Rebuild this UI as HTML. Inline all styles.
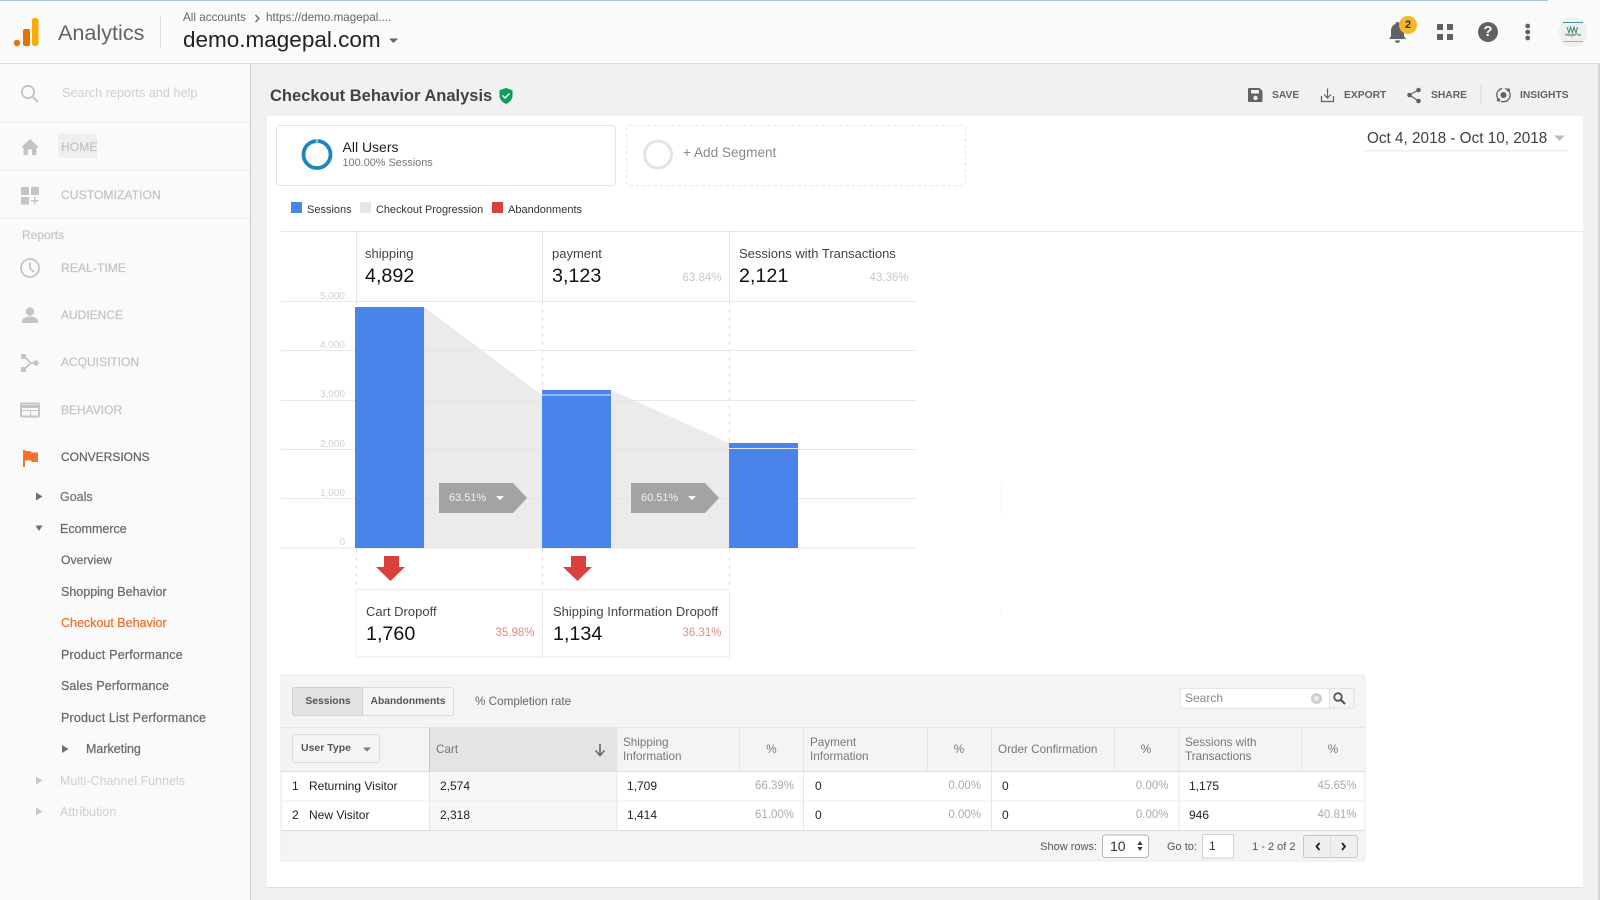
<!DOCTYPE html>
<html><head><meta charset="utf-8"><title>Checkout Behavior Analysis</title>
<style>
html,body{margin:0;padding:0;width:1600px;height:900px;overflow:hidden;background:#f1f1f1;font-family:"Liberation Sans",sans-serif}
svg.g{position:absolute;left:0;top:0}
.t{position:absolute;white-space:nowrap;line-height:20px;height:20px;color:#333;font-size:12px}
.r{text-align:right;transform:translateX(-100%)}
.c{text-align:center;transform:translateX(-50%)}
.nav{font-size:12.2px;left:61px;color:#c4c4c4;-webkit-text-stroke:.25px}
.sub{font-size:12.5px;left:61px;color:#6b6b6b;-webkit-text-stroke:.25px}
.l{font-size:12.5px;color:#cfcfcf;left:60px}
.ax{font-size:10px;color:#d0d0d0}
.k{font-size:13px;color:#444}
.v{font-size:19.7px;color:#111}
.p{font-size:11.5px;color:#c8c8c8}
.d{font-size:11.5px;color:#e08a85}
.b{font-size:10.3px;font-weight:bold;color:#5f6368}
.h{font-size:11.7px;color:#777;line-height:14px;height:auto}
.rw{font-size:12px;color:#222}
.pc{font-size:11.5px;color:#aaa}
</style></head><body>
<svg class="g" width="1600" height="900" viewBox="0 0 1600 900">
<!-- header -->
<rect x="0" y="0" width="1600" height="63" fill="#fafafa"/>
<rect x="0" y="0" width="1548" height="1" fill="#a6c8e8"/>
<rect x="0" y="63" width="1600" height="1" fill="#dcdcdc"/>
<circle cx="17" cy="43" r="3.2" fill="#e8710a"/>
<rect x="23" y="29" width="7" height="17" rx="2" fill="#e37400"/>
<rect x="32" y="18" width="6.500" height="28" rx="2.500" fill="#f9ab00"/>
<rect x="160" y="16" width="1" height="32" fill="#ddd"/>
<path d="M255.500 15l3.500 3.500-3.500 3.500" fill="none" stroke="#666" stroke-width="1.300"/>
<path d="M389 38.500h9l-4.500 4.500z" fill="#5f6368"/>
<!-- right header icons -->
<path d="M1397.500 22a2 2 0 0 1 2 2c3 1 4.500 3.500 4.500 7v5l2 3H1389l2-3v-5c0-3.500 1.500-6 4.500-7a2 2 0 0 1 2-2zM1395 40.500h5a2.500 2.500 0 0 1-5 0z" fill="#5f6368"/>
<circle cx="1408" cy="25" r="9" fill="#f6b82b"/>
<rect x="1437" y="24" width="6" height="6" fill="#5f6368"/><rect x="1447" y="24" width="6" height="6" fill="#5f6368"/>
<rect x="1437" y="34" width="6" height="6" fill="#5f6368"/><rect x="1447" y="34" width="6" height="6" fill="#5f6368"/>
<circle cx="1488" cy="32" r="10" fill="#5f6368"/>
<circle cx="1527.700" cy="26" r="2.400" fill="#5f6368"/><circle cx="1527.700" cy="32" r="2.400" fill="#5f6368"/><circle cx="1527.700" cy="38" r="2.400" fill="#5f6368"/>
<circle cx="1573" cy="32" r="15" fill="#eef1ec"/>
<rect x="1563" y="22" width="20" height="1" fill="#4a8f9a"/>
<rect x="1563" y="41" width="20" height="1" fill="#9cc86a"/>
<path d="M1567 27l2 6 1.500-6 2 6 1.500-6 2 6 1.500-6" fill="none" stroke="#3a8a86" stroke-width="1"/>
<!-- sidebar -->
<rect x="0" y="64" width="250" height="836" fill="#fafafa"/>
<rect x="250" y="64" width="1" height="836" fill="#cfcfcf"/>
<rect x="1598" y="64" width="2" height="836" fill="#d6d6d6"/>
<rect x="0" y="122" width="250" height="1" fill="#eeeeee"/>
<rect x="0" y="170" width="250" height="1" fill="#eeeeee"/>
<rect x="0" y="218" width="250" height="1" fill="#eeeeee"/>
<g fill="none" stroke="#c4c4c4" stroke-width="1.800"><circle cx="28" cy="92" r="6.200"/><path d="M32.500 96.500l5.500 5.500" stroke-width="2.200"/></g>
<rect x="58" y="134" width="39" height="24" fill="#efefef"/>
<path d="M30 139l9 8.500h-2.500V155H32v-5.500h-4V155h-4.500v-7.500H21z" fill="#c4c4c4"/>
<g fill="#c4c4c4"><rect x="21" y="187" width="8" height="8"/><rect x="31" y="187" width="8" height="8"/><rect x="21" y="197" width="8" height="7.500"/><path d="M34 197h1.500v3h3v1.500h-3v3H34v-3h-3V200h3z"/></g>
<g fill="none" stroke="#c4c4c4" stroke-width="1.800"><circle cx="30" cy="268" r="9"/><path d="M30 262.500v6l4 3.500"/></g>
<g fill="#c4c4c4"><circle cx="30" cy="311.500" r="4.300"/><path d="M22 323v-2c0-3 5-4.500 8-4.500s8 1.500 8 4.500v2z"/></g>
<g fill="#c4c4c4"><rect x="21" y="354" width="5" height="5"/><rect x="21" y="367" width="5" height="5"/><circle cx="36" cy="363" r="2.800"/><path d="M24 356.500l7 6.500-7 6.500" fill="none" stroke="#c4c4c4" stroke-width="1.800"/><path d="M30 362.200h5v1.600h-5z"/></g>
<g fill="none" stroke="#c4c4c4" stroke-width="2"><rect x="21" y="403.500" width="18" height="13" rx="1"/></g>
<path d="M21 405h18v3H21z" fill="#c4c4c4"/><path d="M21 410h18v1H21zM30 410h1v6h-1z" fill="#c4c4c4"/>
<path d="M23 450h2v17h-2z" fill="#f4722b"/><path d="M25 451h5.500l1 1.500H38v9.500h-6l-1-1.500H25z" fill="#f4722b"/>
<path d="M36 492.500l6.500 4-6.500 4z" fill="#6f6f6f"/>
<path d="M35.500 525.500h7l-3.500 5.500z" fill="#6f6f6f"/>
<path d="M62 745l6.500 4-6.500 4z" fill="#6f6f6f"/>
<path d="M36 776.500l6.500 4-6.500 4z" fill="#c8c8c8"/>
<path d="M36 807.500l6.500 4-6.500 4z" fill="#c8c8c8"/>
<!-- title -->
<path d="M506 88l6.500 2.300v5.500c0 3.700-2.800 6.500-6.500 8.200-3.700-1.700-6.500-4.500-6.500-8.200v-5.500z" fill="#0f9d58"/>
<path d="M502.500 95.500l2.500 2.500 4.500-4.500" fill="none" stroke="#fff" stroke-width="1.500"/>
<!-- toolbar icons -->
<path d="M1249 88h10.500l3 3v10a1 1 0 0 1-1 1h-12.500a1 1 0 0 1-1-1V89a1 1 0 0 1 1-1z" fill="#5f6368"/><rect x="1251" y="90" width="8" height="3.500" fill="#f1f1f1"/><circle cx="1255.500" cy="98" r="2.200" fill="#f1f1f1"/>
<g fill="none" stroke="#5f6368" stroke-width="1.200"><path d="M1321.500 96v5.500h12V96"/><path d="M1327.500 88.500v9M1324 94.500l3.500 3.500 3.500-3.500"/></g>
<g fill="#5f6368"><circle cx="1409.500" cy="95" r="2.300"/><circle cx="1418.500" cy="90" r="2.300"/><circle cx="1418.500" cy="101" r="2.300"/></g><path d="M1418.500 90l-9 5 9 6" fill="none" stroke="#5f6368" stroke-width="1.200"/>
<rect x="1480.500" y="85" width="1" height="20" fill="#d8d8d8"/>
<g fill="none" stroke="#5f6368" stroke-width="1.300"><circle cx="1503.500" cy="95" r="6.700" stroke-dasharray="13 3 14 3"/></g><circle cx="1503.500" cy="95" r="3" fill="#5f6368"/><circle cx="1508.500" cy="90" r="1.600" fill="#5f6368"/><circle cx="1498.500" cy="100" r="1.600" fill="#5f6368"/>
<!-- card -->
<rect x="267" y="116" width="1316" height="771" fill="#fff"/>
<rect x="267" y="887" width="1316" height="1" fill="#dedede"/>
<rect x="276.500" y="125.500" width="339" height="60" rx="3" fill="#fff" stroke="#e4e4e4"/>
<circle cx="317" cy="154.500" r="13.500" fill="none" stroke="#1b87bd" stroke-width="3.800"/>
<rect x="316.500" y="139" width="1" height="5" fill="#fff"/>
<rect x="626.500" y="125.500" width="339" height="60" rx="3" fill="#fff" stroke="#e6e6e6" stroke-dasharray="3 3"/>
<circle cx="658" cy="154.500" r="13.500" fill="none" stroke="#e4e4e4" stroke-width="3"/>
<path d="M1554 135.500h11l-5.500 5.500z" fill="#bdbdbd"/>
<rect x="1364" y="150" width="204" height="1.500" fill="#ececec"/>
<rect x="291" y="202" width="11" height="11" fill="#4a83ea"/>
<rect x="360" y="202" width="11" height="11" fill="#e6e6e6"/>
<rect x="492" y="202" width="11" height="11" fill="#d9423c"/>
<rect x="281" y="231" width="1302" height="1" fill="#e8e8e8"/>
<!-- grid -->
<g fill="#e8e8e8"><rect x="281" y="301" width="635" height="1"/><rect x="281" y="350" width="635" height="1"/><rect x="281" y="400" width="635" height="1"/><rect x="281" y="449" width="635" height="1"/><rect x="281" y="498" width="635" height="1"/><rect x="281" y="547.500" width="635" height="1"/></g>
<g fill="#e8e8e8"><rect x="356" y="230" width="1" height="71"/><rect x="542" y="230" width="1" height="71"/><rect x="729" y="230" width="1" height="71"/></g>
<g stroke="#e0e0e0" stroke-dasharray="4 4" fill="none"><path d="M356.500 301V589M542.500 301V589M729.500 301V589"/></g>
<path d="M424 307L542 395V548H424z" fill="#e4e4e4" fill-opacity=".75"/>
<path d="M611 390L729 443V548H611z" fill="#e4e4e4" fill-opacity=".75"/>
<rect x="355" y="307" width="69" height="241" fill="#4a83ea"/>
<rect x="542" y="390" width="69" height="158" fill="#4a83ea"/><rect x="542" y="394.500" width="69" height="1" fill="#dfe9fb"/>
<rect x="729" y="443" width="69" height="105" fill="#4a83ea"/><rect x="729" y="448" width="69" height="1" fill="#dfe9fb"/>
<path d="M439 483h74l14 15-14 15h-74z" fill="#a3a3a3"/>
<path d="M631 483h74l14 15-14 15h-74z" fill="#a3a3a3"/>
<path d="M496 496h8l-4 4z" fill="#fff"/><path d="M688 496h8l-4 4z" fill="#fff"/>
<path d="M384 556h15v11h6l-14.500 14L376 567h8z" fill="#d9423c"/>
<path d="M571 556h15v11h6l-14.500 14L563 567h8z" fill="#d9423c"/>
<rect x="356" y="589.500" width="373.500" height="67.500" fill="none" stroke="#ececec"/>
<path d="M542.500 589.500V657" stroke="#ececec"/>
<rect x="1001" y="483" width="1" height="30" fill="#f4f4f4"/><rect x="1001" y="610" width="1" height="6" fill="#eeeeee"/>
<!-- table panel -->
<rect x="281" y="675" width="1084" height="186" fill="#f4f4f4"/>
<rect x="281" y="675" width="1084" height="186" fill="none" stroke="#ebebeb"/>
<rect x="292.500" y="687.500" width="161" height="28" rx="2" fill="#f5f5f5" stroke="#dcdcdc"/>
<rect x="292.500" y="687.500" width="70" height="28" rx="2" fill="#e2e2e2" stroke="#d0d0d0"/>
<rect x="281" y="727" width="1084" height="1" fill="#e6e6e6"/>
<rect x="292.500" y="734.500" width="87" height="28" rx="2" fill="#f5f5f5" stroke="#dcdcdc"/>
<path d="M363 747.500h8l-4 4z" fill="#777"/>
<rect x="429" y="727" width="188" height="45" fill="#e4e4e4"/>
<rect x="429" y="727" width="1" height="45" fill="#c8c8c8"/>
<path d="M600 744v11M595.500 750.500L600 755.500l4.500-5" fill="none" stroke="#666" stroke-width="1.600"/>
<rect x="282" y="771" width="1082" height="59" fill="#fff"/>
<rect x="281" y="771" width="1084" height="1" fill="#dedede"/>
<rect x="429" y="772" width="188" height="58" fill="#f7f7f7"/>
<rect x="281" y="800.500" width="1084" height="1" fill="#eeeeee"/>
<rect x="281" y="830" width="1084" height="1" fill="#dedede"/>
<g fill="#e6e6e6"><rect x="429" y="772" width="1" height="58"/><rect x="616.500" y="727" width="1" height="103"/><rect x="739" y="727" width="1" height="44"/><rect x="803" y="727" width="1" height="103"/><rect x="927" y="727" width="1" height="44"/><rect x="991" y="727" width="1" height="103"/><rect x="1114" y="727" width="1" height="44"/><rect x="1178.500" y="727" width="1" height="103"/><rect x="1301.500" y="727" width="1" height="44"/></g>
<rect x="1180.500" y="688.500" width="149" height="19.500" fill="#fff" stroke="#e6e6e6"/>
<rect x="1329.500" y="688.500" width="24.500" height="19.500" fill="#f5f5f5" stroke="#e0e0e0"/>
<circle cx="1316.500" cy="698.500" r="5.500" fill="#cfcfcf"/><path d="M1314.500 696.500l4 4m0-4l-4 4" stroke="#fff" stroke-width="1.200"/>
<circle cx="1338" cy="697" r="3.800" fill="none" stroke="#555" stroke-width="1.800"/><path d="M1341 700l4 4" stroke="#555" stroke-width="2.200"/>
<rect x="1102.500" y="835" width="46" height="22.500" rx="3" fill="#fff" stroke="#b5b5b5"/>
<path d="M1137.500 845l2.500-4 2.500 4zM1137.500 847l2.500 4 2.500-4z" fill="#333"/>
<rect x="1202.500" y="834.500" width="31" height="23.500" fill="#fff" stroke="#d0d0d0"/>
<rect x="1303.500" y="835.500" width="54" height="22" rx="2" fill="#efefef" stroke="#c8c8c8"/>
<rect x="1330" y="836" width="1" height="21" fill="#dcdcdc"/>
<path d="M1319.500 843l-3 3.500 3 3.500M1342 843l3 3.500-3 3.500" fill="none" stroke="#222" stroke-width="1.800"/>
</svg>

<div class="t" style="left:58px;top:22px;font-size:21.600px;color:#5f6368;line-height:22px">Analytics</div>
<div class="t" style="left:183px;top:8px;font-size:11.700px;color:#666">All accounts</div>
<div class="t" style="left:266px;top:8px;font-size:11.700px;color:#666">https://demo.magepal....</div>
<div class="t" style="left:183px;top:30px;font-size:22.500px;color:#222">demo.magepal.com</div>
<div class="t c" style="left:1408px;top:15px;font-size:11px;font-weight:bold;color:#333">2</div>
<div class="t c" style="left:1488px;top:22px;font-size:15px;font-weight:bold;color:#fff">?</div>
<div class="t c" style="left:1573px;top:25px;font-size:4px;color:#444">MagePal</div>

<div class="t" style="left:62px;top:83px;font-size:12.700px;color:#cfcfcf">Search reports and help</div>
<div class="t nav" style="top:137px">HOME</div>
<div class="t nav" style="top:185px">CUSTOMIZATION</div>
<div class="t" style="left:22px;top:224.500px;color:#c4c4c4;-webkit-text-stroke:.2px">Reports</div>
<div class="t nav" style="top:258px">REAL-TIME</div>
<div class="t nav" style="top:305px;font-size:12px">AUDIENCE</div>
<div class="t nav" style="top:352px;font-size:12px">ACQUISITION</div>
<div class="t nav" style="top:399.500px;font-size:12px">BEHAVIOR</div>
<div class="t nav" style="top:447px;color:#666;font-size:12px">CONVERSIONS</div>
<div class="t sub" style="left:60px;top:486.500px;color:#777">Goals</div>
<div class="t sub" style="left:60px;top:518.500px">Ecommerce</div>
<div class="t sub" style="top:549.500px;font-size:12.200px">Overview</div>
<div class="t sub" style="top:581.500px">Shopping Behavior</div>
<div class="t sub" style="top:612.500px;color:#f0702e">Checkout Behavior</div>
<div class="t sub" style="top:644.500px;letter-spacing:.2px">Product Performance</div>
<div class="t sub" style="top:675.500px;letter-spacing:.1px">Sales Performance</div>
<div class="t sub" style="top:707.500px;letter-spacing:.17px">Product List Performance</div>
<div class="t sub" style="left:86px;top:739px">Marketing</div>
<div class="t l" style="top:770.500px">Multi-Channel Funnels</div>
<div class="t l" style="top:801.500px">Attribution</div>

<div class="t" style="left:270px;top:86px;font-size:16.500px;font-weight:bold;color:#424242">Checkout Behavior Analysis</div>
<div class="t b" style="left:1272px;top:85.500px">SAVE</div>
<div class="t b" style="left:1344px;top:85.500px">EXPORT</div>
<div class="t b" style="left:1431px;top:85.500px">SHARE</div>
<div class="t b" style="left:1520px;top:85.500px">INSIGHTS</div>

<div class="t" style="left:342.500px;top:137px;font-size:14px;color:#222">All Users</div>
<div class="t" style="left:342.500px;top:153px;font-size:10.900px;color:#777">100.00% Sessions</div>
<div class="t" style="left:683px;top:142.500px;font-size:13.600px;color:#888">+ Add Segment</div>
<div class="t" style="left:1367px;top:128.500px;font-size:15.300px;color:#3c4043">Oct 4, 2018 - Oct 10, 2018</div>

<div class="t" style="left:307px;top:200px;font-size:11px;color:#333">Sessions</div>
<div class="t" style="left:376px;top:200px;font-size:10.900px;color:#333">Checkout Progression</div>
<div class="t" style="left:508px;top:200px;font-size:11px;color:#333">Abandonments</div>

<div class="t k" style="left:365px;top:244px">shipping</div>
<div class="t v" style="left:365px;top:266px">4,892</div>
<div class="t k" style="left:552px;top:244px">payment</div>
<div class="t v" style="left:552px;top:266px">3,123</div>
<div class="t p r" style="left:721.500px;top:267.500px">63.84%</div>
<div class="t k" style="left:739px;top:244px">Sessions with Transactions</div>
<div class="t v" style="left:739px;top:266px">2,121</div>
<div class="t p r" style="left:908.500px;top:267.500px">43.36%</div>

<div class="t ax r" style="left:345px;top:286.500px">5,000</div>
<div class="t ax r" style="left:345px;top:335.500px">4,000</div>
<div class="t ax r" style="left:345px;top:385px">3,000</div>
<div class="t ax r" style="left:345px;top:434.500px">2,000</div>
<div class="t ax r" style="left:345px;top:483.500px">1,000</div>
<div class="t ax r" style="left:345px;top:532.500px">0</div>

<div class="t" style="left:449px;top:487.500px;font-size:11px;color:#f2f2f2">63.51%</div>
<div class="t" style="left:641px;top:487.500px;font-size:11px;color:#f2f2f2">60.51%</div>

<div class="t k" style="left:366px;top:601.500px">Cart Dropoff</div>
<div class="t v" style="left:366px;top:623.500px">1,760</div>
<div class="t d r" style="left:534.500px;top:622.500px">35.98%</div>
<div class="t k" style="left:553px;top:601.500px">Shipping Information Dropoff</div>
<div class="t v" style="left:553px;top:623.500px">1,134</div>
<div class="t d r" style="left:721.500px;top:622.500px">36.31%</div>

<div class="t c" style="left:328px;top:691.500px;font-size:10.300px;font-weight:bold;color:#555">Sessions</div>
<div class="t c" style="left:408px;top:691.500px;font-size:10.300px;font-weight:bold;color:#555">Abandonments</div>
<div class="t" style="left:475px;top:691.500px;font-size:11.700px;color:#666">% Completion rate</div>
<div class="t" style="left:1185px;top:688px;font-size:12px;color:#888">Search</div>

<div class="t" style="left:301px;top:737.500px;font-size:10.500px;font-weight:bold;color:#555">User Type</div>
<div class="t h" style="left:436px;top:743px">Cart</div>
<div class="t h" style="left:623px;top:736px">Shipping<br>Information</div>
<div class="t h c" style="left:771.500px;top:743px">%</div>
<div class="t h" style="left:810px;top:736px">Payment<br>Information</div>
<div class="t h c" style="left:959px;top:743px">%</div>
<div class="t h" style="left:998px;top:743px">Order Confirmation</div>
<div class="t h c" style="left:1146px;top:743px">%</div>
<div class="t h" style="left:1185px;top:736px">Sessions with<br>Transactions</div>
<div class="t h c" style="left:1333px;top:743px">%</div>

<div class="t rw" style="left:292px;top:775.500px">1</div>
<div class="t rw" style="left:309px;top:775.500px">Returning Visitor</div>
<div class="t rw" style="left:440px;top:775.500px">2,574</div>
<div class="t rw" style="left:627px;top:775.500px">1,709</div>
<div class="t pc r" style="left:794px;top:775.500px">66.39%</div>
<div class="t rw" style="left:815px;top:775.500px">0</div>
<div class="t pc r" style="left:981px;top:775.500px">0.00%</div>
<div class="t rw" style="left:1002px;top:775.500px">0</div>
<div class="t pc r" style="left:1168.500px;top:775.500px">0.00%</div>
<div class="t rw" style="left:1189px;top:775.500px">1,175</div>
<div class="t pc r" style="left:1356.500px;top:775.500px">45.65%</div>

<div class="t rw" style="left:292px;top:805px">2</div>
<div class="t rw" style="left:309px;top:805px">New Visitor</div>
<div class="t rw" style="left:440px;top:805px">2,318</div>
<div class="t rw" style="left:627px;top:805px">1,414</div>
<div class="t pc r" style="left:794px;top:805px">61.00%</div>
<div class="t rw" style="left:815px;top:805px">0</div>
<div class="t pc r" style="left:981px;top:805px">0.00%</div>
<div class="t rw" style="left:1002px;top:805px">0</div>
<div class="t pc r" style="left:1168.500px;top:805px">0.00%</div>
<div class="t rw" style="left:1189px;top:805px">946</div>
<div class="t pc r" style="left:1356.500px;top:805px">40.81%</div>

<div class="t r" style="left:1097px;top:836.500px;font-size:11px;color:#555">Show rows:</div>
<div class="t" style="left:1110px;top:836px;font-size:14px;color:#333">10</div>
<div class="t" style="left:1167px;top:836.500px;font-size:11px;color:#555">Go to:</div>
<div class="t" style="left:1209px;top:836px;font-size:12px;color:#333">1</div>
<div class="t r" style="left:1295.500px;top:836.500px;font-size:11px;color:#555">1 - 2 of 2</div>
</body></html>
